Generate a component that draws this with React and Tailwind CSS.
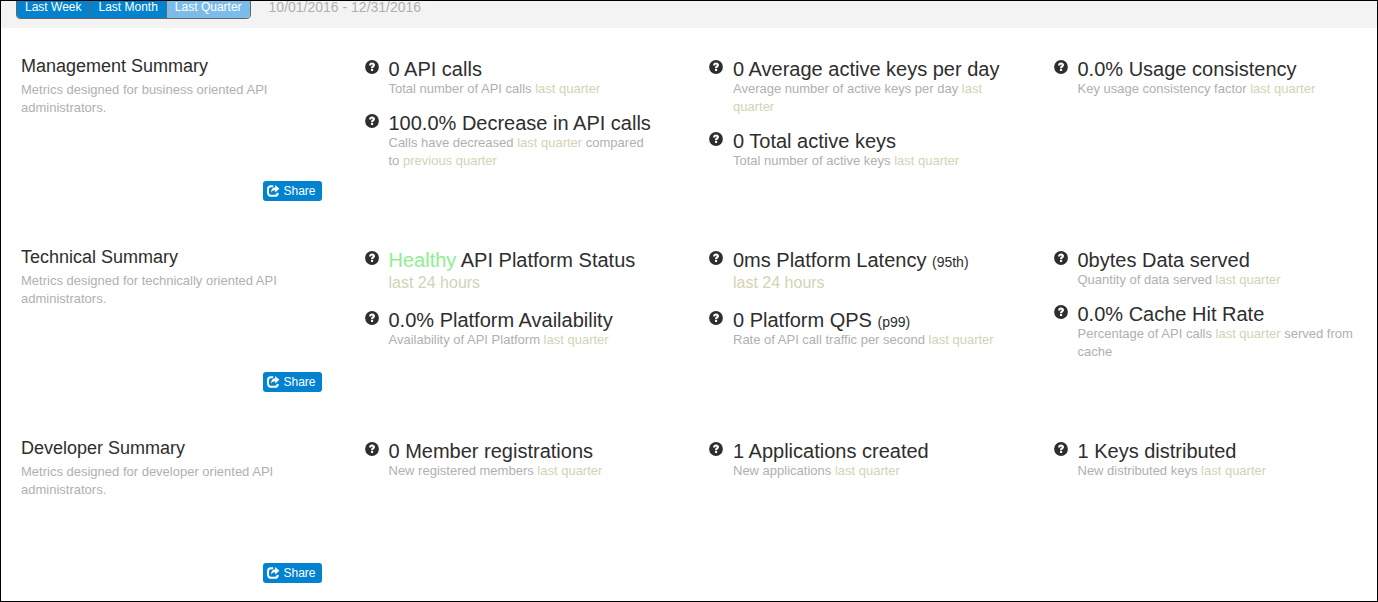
import React from "react";

const RANGES = [
  { label: "Last Week", active: false },
  { label: "Last Month", active: false },
  { label: "Last Quarter", active: true },
];

const LQ = <Period>last quarter</Period>;

const SECTIONS = [
  {
    title: "Management Summary",
    about: "Metrics designed for business oriented API administrators.",
    columns: [
      [
        { title: "0 API calls", note: <>Total number of API calls {LQ}</> },
        {
          title: "100.0% Decrease in API calls",
          note: (
            <>
              Calls have decreased {LQ} compared to{"\u00a0"}
              <Period>previous quarter</Period>
            </>
          ),
        },
      ],
      [
        { title: "0 Average active keys per day", note: <>Average number of active keys per day {LQ}</> },
        { title: "0 Total active keys", note: <>Total number of active keys {LQ}</> },
      ],
      [{ title: "0.0% Usage consistency", note: <>Key usage consistency factor {LQ}</> }],
    ],
  },
  {
    title: "Technical Summary",
    about: "Metrics designed for technically oriented API administrators.",
    columns: [
      [
        {
          title: (
            <>
              <span className="text-[#90ee90]">Healthy</span> API Platform Status
            </>
          ),
          live: "last 24 hours",
        },
        { title: "0.0% Platform Availability", note: <>Availability of API Platform {LQ}</> },
      ],
      [
        {
          title: (
            <>
              0ms Platform Latency <small className="text-sm leading-4">(95th)</small>
            </>
          ),
          live: "last 24 hours",
        },
        {
          title: (
            <>
              0 Platform QPS <small className="text-sm leading-4">(p99)</small>
            </>
          ),
          note: <>Rate of API call traffic per second {LQ}</>,
        },
      ],
      [
        { title: "0bytes Data served", note: <>Quantity of data served {LQ}</> },
        { title: "0.0% Cache Hit Rate", note: <>Percentage of API calls {LQ} served from cache</> },
      ],
    ],
  },
  {
    title: "Developer Summary",
    about: "Metrics designed for developer oriented API administrators.",
    columns: [
      [{ title: "0 Member registrations", note: <>New registered members {LQ}</> }],
      [{ title: "1 Applications created", note: <>New applications {LQ}</> }],
      [{ title: "1 Keys distributed", note: <>New distributed keys {LQ}</> }],
    ],
  },
];

function Period({ children }) {
  return <span className="text-[#d3d3b4]">{children}</span>;
}

function HelpIcon() {
  return (
    <svg viewBox="0 0 14 14" className="mt-0.5 size-3.5 shrink-0" aria-hidden="true">
      <circle cx="7" cy="7" r="6.9" fill="#2e2e2e" />
      <path
        d="M4.100 5.600C4.100 3.700 5.200 2.600 7 2.600c1.800 0 3 .95 3 2.450 0 1.100-.6 1.700-1.300 2.200-.45.350-.6.5-.6.950H6c0-1.100.35-1.600 1-2.100.5-.35.75-.6.75-1 0-.35-.3-.6-.75-.6-.55 0-.85.4-.85 1.100z"
        fill="#fff"
      />
      <rect x="6" y="9" width="2.100" height="2" fill="#fff" />
    </svg>
  );
}

function ShareIcon() {
  return (
    <svg viewBox="0 0 14 14" className="size-3.5 shrink-0" aria-hidden="true">
      <path
        d="M7.200 2.200H5A3 3 0 0 0 2 5.200v3.600A3 3 0 0 0 5 11.800h3.800a3 3 0 0 0 3-2.900"
        fill="none"
        stroke="#fff"
        strokeWidth="2"
      />
      <path d="M9.200 1 13.400 4.700 9.200 8.400V6.300C7.400 6.200 6.200 6.900 5.100 8.700 5 5.500 6.500 3.300 9.200 3.200z" fill="#fff" />
    </svg>
  );
}

function Metric({ title, note, live }) {
  return (
    <li className="flex gap-2.5">
      <HelpIcon />
      <div className="min-w-0 flex-1">
        <h3 className="text-xl leading-[22px] text-[#2e2e2e]">{title}</h3>
        {live && <p className="text-base leading-6 text-[#d3d3b4]">{live}</p>}
        {note && <p className="text-[13px] leading-[18px] text-[#b0b0b0]">{note}</p>}
      </div>
    </li>
  );
}

function Section({ title, about, columns }) {
  return (
    <section className="grid min-h-[191px] grid-cols-4">
      <div className="flex flex-col pt-7 pr-[23px] pb-[18px] pl-[21px]">
        <h2 className="text-lg leading-5 text-[#2e2e2e]">{title}</h2>
        <p className="mt-[5px] text-[13px] leading-[18px] text-[#b0b0b0]">{about}</p>
        <button
          type="button"
          className="mt-auto flex h-5 items-center gap-[3px] self-end rounded-[3px] bg-[#0382cf] pr-1.5 pl-[3px] text-[12px] leading-5 text-white"
        >
          <ShareIcon />
          Share
        </button>
      </div>
      {columns.map((metrics, i) => (
        <ul key={i} className="flex flex-col gap-3.5 pt-[30px] pr-4 pl-5">
          {metrics.map((m, j) => (
            <Metric key={j} {...m} />
          ))}
        </ul>
      ))}
    </section>
  );
}

export default function App() {
  return (
    <div className="min-h-screen bg-white font-['Liberation_Sans',Arial,sans-serif] outline outline-black -outline-offset-1">
      <header className="flex h-7 items-end gap-[18px] overflow-hidden bg-[#f3f3f3] pb-[9px] pl-4">
        <div className="flex h-6 shrink-0 overflow-hidden rounded border border-[#666]">
          {RANGES.map(({ label, active }) => (
            <button
              key={label}
              type="button"
              aria-pressed={active}
              className={`border-r border-[#666] px-2 text-[12px] leading-5 text-white last:border-r-0 ${active ? "bg-[#7bbde8]" : "bg-[#0382cf]"}`}
            >
              {label}
            </button>
          ))}
        </div>
        <span className="text-sm leading-6 text-[#b0b0b0]">10/01/2016 - 12/31/2016</span>
      </header>
      <main>
        {SECTIONS.map((s) => (
          <Section key={s.title} {...s} />
        ))}
      </main>
    </div>
  );
}
